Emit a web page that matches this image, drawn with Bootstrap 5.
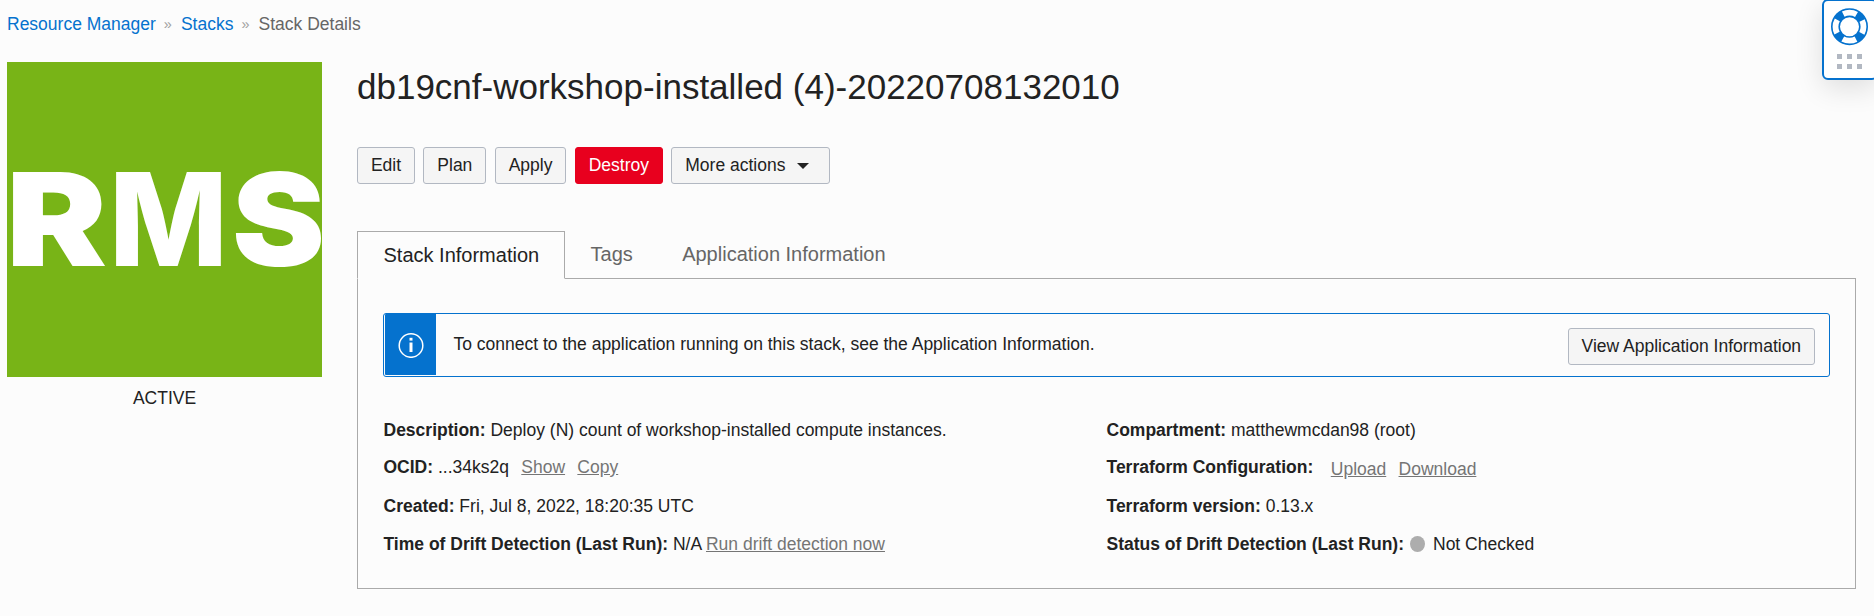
<!DOCTYPE html>
<html lang="en">
<head>
<meta charset="utf-8">
<title>Stack Details</title>
<link href="https://cdn.jsdelivr.net/npm/bootstrap@5.3.0/dist/css/bootstrap.min.css" rel="stylesheet">
<style>
body{background:#fcfcfc;color:#222;font-family:"Liberation Sans",Arial,sans-serif;font-size:17.5px;line-height:24px;overflow:hidden}
.crumbs{padding:12px 0 0 7px;height:62px;--bs-breadcrumb-divider-color:#a0a0a0}
.crumbs .breadcrumb-item+.breadcrumb-item{padding-left:8px}
.crumbs .breadcrumb-item+.breadcrumb-item::before{content:"»";font-size:14.5px;padding-right:9px;color:#a0a0a0}
.crumbs a{color:#0572ce;text-decoration:none}
.crumbs .active{color:#666}
.layout{padding-left:7px;padding-right:18px;gap:35px}
.side-pane{width:315px}
.stack-logo{background:#78b417;height:315px}
.stack-logo svg{overflow:visible}
.stack-state{padding-top:9px}
.main-pane{min-width:0}
.stack-title{font-size:35px;line-height:42px;font-weight:400;margin:4px 0 0;padding-bottom:39px}
.actions{gap:8.5px;height:84px}
.oci-btn{--bs-btn-font-size:17.5px;--bs-btn-line-height:24px;--bs-btn-padding-x:12.9px;--bs-btn-padding-y:5px;--bs-btn-border-radius:3px;--bs-btn-color:#222;--bs-btn-bg:#f5f5f5;--bs-btn-border-color:#b2b8c2;--bs-btn-hover-bg:#ececec;--bs-btn-hover-color:#222;--bs-btn-hover-border-color:#b2b8c2;height:37px;white-space:nowrap;padding-bottom:6px}
.oci-btn.destroy{--bs-btn-color:#fff;--bs-btn-bg:#e8001e;--bs-btn-border-color:#e8001e}
.oci-btn.dropdown-toggle{padding-right:19.5px}
.oci-btn.dropdown-toggle::after{border-top:6px solid #222;border-left:6px solid transparent;border-right:6px solid transparent;margin-left:12px;vertical-align:2px}
.stack-tabs{--bs-nav-tabs-border-width:0;font-size:20px}
.stack-tabs .nav-link{color:#666;border:1px solid transparent;border-radius:0;padding:10px 23px 13px 24.4px;margin:0;height:47px;line-height:24px}
.stack-tabs .nav-link.active{color:#222;background:#fcfcfc;border-color:#aaa #aaa #fcfcfc;padding:11px 25px 13px 25.5px;height:48px;margin-bottom:-1px;position:relative;z-index:1}
.info-panel{border:1px solid #aaa;height:311px;padding:34px 25px 0}
.notice{border:1px solid #0572ce;border-radius:3px;height:64px;padding:0 14px 1px 1px}
.notice-icon{width:51px;background:#0572ce;border-radius:1px 0 0 1px}
.notice-text{padding-left:17.5px;margin-top:-2px}
.notice .oci-btn{margin-top:3px}
.facts{padding-top:34px}
.facts .col-6{padding:0}
.facts .col-6:first-child{padding-left:.5px}
.fact{height:37px;white-space:pre}
.fact.tall{height:41px}
.fact.last{height:35px}
.fact a{color:#757575}
.fact .act{margin-left:12.3px}
.cfg-links{margin-left:17.5px}
.dot{width:15px;height:16px;border-radius:50%;background:#adadad;margin:0 8px 0 6px}
.help-box{top:-1px;right:-4px;width:56px;height:81px;border:2px solid #0572ce;border-radius:6px;background:#fff;box-shadow:0 8px 28px rgba(0,0,0,.12)}
</style>
</head>
<body>
<nav aria-label="breadcrumb">
  <ol class="breadcrumb crumbs mb-0">
    <li class="breadcrumb-item"><a href="#">Resource Manager</a></li>
    <li class="breadcrumb-item"><a href="#">Stacks</a></li>
    <li class="breadcrumb-item active" aria-current="page">Stack Details</li>
  </ol>
</nav>
<div class="layout d-flex">
  <aside class="side-pane flex-shrink-0">
    <div class="stack-logo">
      <svg class="d-block" width="315" height="315" font-family="Inter" font-weight="900" font-size="129" fill="#fff">
        <text x="-1" y="204" textLength="101" lengthAdjust="spacingAndGlyphs">R</text>
        <text x="102" y="204" textLength="119" lengthAdjust="spacingAndGlyphs" font-weight="800">M</text>
        <text x="225" y="204" textLength="93" lengthAdjust="spacingAndGlyphs">S</text>
      </svg>
    </div>
    <div class="stack-state text-center">ACTIVE</div>
  </aside>
  <main class="main-pane flex-grow-1">
    <h1 class="stack-title">db19cnf-workshop-installed (4)-20220708132010</h1>
    <div class="actions d-flex align-items-start">
      <button class="btn oci-btn">Edit</button>
      <button class="btn oci-btn">Plan</button>
      <button class="btn oci-btn">Apply</button>
      <button class="btn oci-btn destroy">Destroy</button>
      <button class="btn oci-btn dropdown-toggle">More actions</button>
    </div>
    <ul class="nav nav-tabs stack-tabs">
      <li class="nav-item"><a class="nav-link active" href="#">Stack Information</a></li>
      <li class="nav-item"><a class="nav-link" href="#">Tags</a></li>
      <li class="nav-item"><a class="nav-link" href="#">Application Information</a></li>
    </ul>
    <section class="info-panel">
      <div class="notice d-flex align-items-center">
        <div class="notice-icon align-self-stretch d-flex align-items-center justify-content-center">
          <svg width="26" height="26" viewBox="0 0 26 26" fill="none" stroke="#fff"><circle cx="13" cy="13.5" r="11.8" stroke-width="1.5"/><path d="M13 10.5v9.5" stroke-width="3"/><path d="M13 5.8v2.8" stroke-width="3"/></svg>
        </div>
        <div class="notice-text flex-grow-1">To connect to the application running on this stack, see the Application Information.</div>
        <button class="btn oci-btn">View Application Information</button>
      </div>
      <div class="row facts gx-0">
        <div class="col-6">
          <div class="fact d-flex align-items-center"><b>Description: </b>Deploy (N) count of workshop-installed compute instances.</div>
          <div class="fact d-flex align-items-center"><b>OCID: </b>...34ks2q<a class="act" href="#">Show</a><a class="act" href="#">Copy</a></div>
          <div class="fact tall d-flex align-items-center"><b>Created: </b>Fri, Jul 8, 2022, 18:20:35 UTC</div>
          <div class="fact last d-flex align-items-center"><b>Time of Drift Detection (Last Run): </b>N/A <a href="#">Run drift detection now</a></div>
        </div>
        <div class="col-6">
          <div class="fact d-flex align-items-center"><b>Compartment: </b>matthewmcdan98 (root)</div>
          <div class="fact d-flex align-items-center"><b>Terraform Configuration:</b><span class="cfg-links pt-1"><a href="#">Upload</a><a class="act" href="#">Download</a></span></div>
          <div class="fact tall d-flex align-items-center"><b>Terraform version: </b>0.13.x</div>
          <div class="fact last d-flex align-items-center"><b>Status of Drift Detection (Last Run):</b><span class="dot"></span>Not Checked</div>
        </div>
      </div>
    </section>
  </main>
</div>
<div class="help-box position-absolute">
  <svg class="d-block" width="52" height="77" viewBox="0 0 52 77">
    <circle cx="25.5" cy="25.7" r="14" fill="none" stroke="#0572ce" stroke-width="9"/>
    <circle cx="25.5" cy="25.7" r="14" fill="none" stroke="#fff" stroke-width="5.8" stroke-dasharray="13.8 8.19" stroke-dashoffset="6.9"/>
    <path fill="#b2b8c2" d="M13 53h5v5h-5zM23 53h5v5h-5zM33 53h5v5h-5zM13 63h5v5h-5zM23 63h5v5h-5zM33 63h5v5h-5z"/>
  </svg>
</div>
<script src="https://cdn.jsdelivr.net/npm/bootstrap@5.3.0/dist/js/bootstrap.bundle.min.js"></script>
</body>
</html>
